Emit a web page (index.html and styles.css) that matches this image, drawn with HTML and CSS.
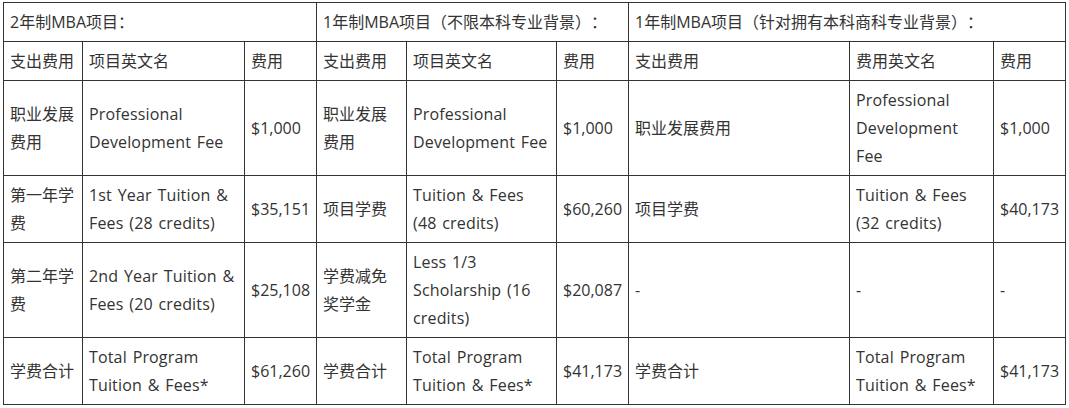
FILE: index.html
```html
<!DOCTYPE html>
<html lang="zh-CN">
<head>
<meta charset="utf-8">
<title>MBA 费用</title>
<link rel="stylesheet" href="styles.css">
</head>
<body>
<table class="fees">
  <colgroup>
    <col class="c1"><col class="c2"><col class="c3">
    <col class="c4"><col class="c5"><col class="c6">
    <col class="c7"><col class="c8"><col class="c9">
  </colgroup>
  <tr class="r-title">
    <td colspan="3">2年制MBA项目：</td>
    <td colspan="3">1年制MBA项目（不限本科专业背景）：</td>
    <td colspan="3">1年制MBA项目（针对拥有本科商科专业背景）：</td>
  </tr>
  <tr>
    <td>支出费用</td><td>项目英文名</td><td>费用</td>
    <td>支出费用</td><td>项目英文名</td><td>费用</td>
    <td>支出费用</td><td>费用英文名</td><td>费用</td>
  </tr>
  <tr>
    <td>职业发展费用</td><td class="en">Professional<br>Development Fee</td><td>$1,000</td>
    <td>职业发展费用</td><td class="en">Professional<br>Development Fee</td><td>$1,000</td>
    <td>职业发展费用</td><td class="en">Professional<br>Development<br>Fee</td><td>$1,000</td>
  </tr>
  <tr>
    <td>第一年学费</td><td class="en">1st Year Tuition &amp;<br>Fees (28 credits)</td><td>$35,151</td>
    <td>项目学费</td><td class="en">Tuition &amp; Fees<br>(48 credits)</td><td>$60,260</td>
    <td>项目学费</td><td class="en">Tuition &amp; Fees<br>(32 credits)</td><td>$40,173</td>
  </tr>
  <tr>
    <td>第二年学费</td><td class="en">2nd Year Tuition &amp;<br>Fees (20 credits)</td><td>$25,108</td>
    <td>学费减免奖学金</td><td class="en">Less 1/3<br>Scholarship (16<br>credits)</td><td>$20,087</td>
    <td>-</td><td>-</td><td>-</td>
  </tr>
  <tr>
    <td>学费合计</td><td class="en">Total Program<br>Tuition &amp; Fees*</td><td>$61,260</td>
    <td>学费合计</td><td class="en">Total Program<br>Tuition &amp; Fees*</td><td>$41,173</td>
    <td>学费合计</td><td class="en">Total Program<br>Tuition &amp; Fees*</td><td>$41,173</td>
  </tr>
</table>
</body>
</html>
```
FILE: styles.css
```css
html, body {
  margin: 0;
  background: #fff;
}
body {
  padding: 2px 0 0 3px;
  font-family: "Open Sans", "Noto Sans CJK SC", sans-serif;
  font-size: 16px;
  color: #333;
  text-spacing-trim: space-all;
}
.fees {
  border-collapse: collapse;
  table-layout: fixed;
  width: 1063px;
}
.fees td {
  border: 1px solid #333;
  padding: 5px 6px;
  line-height: 28px;
  vertical-align: middle;
  white-space: normal;
  overflow: hidden;
}
.fees td.en {
  white-space: nowrap;
  letter-spacing: 0.15px;
  word-spacing: 1.5px;
}
.c1 { width: 79px; }
.c2 { width: 162px; }
.c3 { width: 72px; }
.c4 { width: 90px; }
.c5 { width: 150px; }
.c6 { width: 72px; }
.c7 { width: 221px; }
.c8 { width: 144px; }
.c9 { width: 72px; }
```
